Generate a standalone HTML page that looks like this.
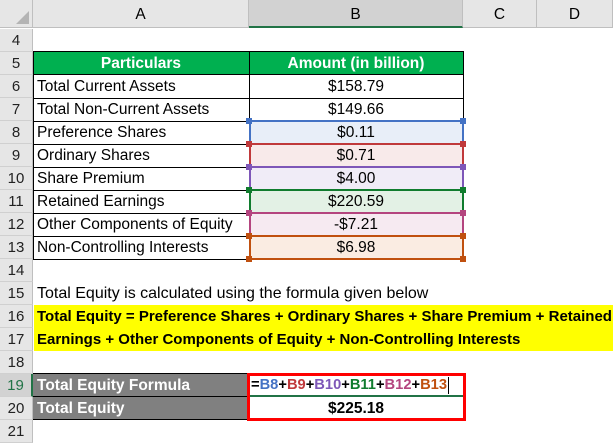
<!DOCTYPE html>
<html><head><style>
*{margin:0;padding:0;box-sizing:border-box}
body{width:613px;height:440px;background:#fff;position:relative;overflow:hidden;font-family:"Liberation Sans",sans-serif;font-size:15.5px;color:#000}
.a{position:absolute}
.rn{position:absolute;left:0;width:33px;height:23px;background:#e6e6e6;border-bottom:1px solid #d0d0d0;border-right:1px solid #bfbfbf;text-align:center;line-height:23px;font-size:15px;color:#222}
.t{position:absolute;height:23px;line-height:23px;white-space:nowrap}
.c{text-align:center}
.rb{position:absolute;border:2px solid}
.sq{position:absolute;width:6px;height:6px}
</style></head><body>
<div class="a" style="left:0;top:0;width:613px;height:28px;background:#e6e6e6;border-bottom:1px solid #bfbfbf"></div>
<div class="a" style="left:0;top:0;width:33px;height:28px;border-right:1px solid #bfbfbf"></div>
<div class="a" style="left:16px;top:11px;width:0;height:0;border-left:13px solid transparent;border-bottom:13px solid #b4b4b4"></div>
<div class="a c" style="left:33px;top:0;width:216px;height:28px;line-height:30px;border-right:1px solid #bfbfbf">A</div>
<div class="a c" style="left:249px;top:0;width:214px;height:28px;line-height:30px;background:#d2d2d2;border-bottom:2px solid #217346;border-right:1px solid #bfbfbf">B</div>
<div class="a c" style="left:463px;top:0;width:74px;height:28px;line-height:30px;border-right:1px solid #bfbfbf">C</div>
<div class="a c" style="left:537px;top:0;width:76px;height:28px;line-height:30px;border-right:1px solid #bfbfbf">D</div>

<div class="rn" style="top:29px">4</div>
<div class="rn" style="top:52px">5</div>
<div class="rn" style="top:75px">6</div>
<div class="rn" style="top:98px">7</div>
<div class="rn" style="top:121px">8</div>
<div class="rn" style="top:144px">9</div>
<div class="rn" style="top:167px">10</div>
<div class="rn" style="top:190px">11</div>
<div class="rn" style="top:213px">12</div>
<div class="rn" style="top:236px">13</div>
<div class="rn" style="top:259px">14</div>
<div class="rn" style="top:282px">15</div>
<div class="rn" style="top:305px">16</div>
<div class="rn" style="top:328px">17</div>
<div class="rn" style="top:351px">18</div>
<div class="rn" style="top:374px;background:#d2d2d2;border-right:2px solid #217346;color:#217346">19</div>
<div class="rn" style="top:397px">20</div>
<div class="rn" style="top:420px">21</div>

<div class="a" style="left:33px;top:51px;width:431px;height:24px;background:#00b050;border:1px solid #000"></div>
<div class="t c" style="left:33px;top:52px;width:216px;color:#fff;font-weight:bold">Particulars</div>
<div class="t c" style="left:249px;top:52px;width:214px;color:#fff;font-weight:bold">Amount (in billion)</div>
<div class="a" style="left:249px;top:51px;width:1px;height:70px;background:#000"></div>
<div class="a" style="left:463px;top:51px;width:1px;height:70px;background:#000"></div>
<div class="a" style="left:33px;top:98px;width:431px;height:1px;background:#000"></div>
<div class="a" style="left:33px;top:121px;width:216px;height:1px;background:#000"></div>
<div class="a" style="left:33px;top:144px;width:216px;height:1px;background:#000"></div>
<div class="a" style="left:33px;top:167px;width:216px;height:1px;background:#000"></div>
<div class="a" style="left:33px;top:190px;width:216px;height:1px;background:#000"></div>
<div class="a" style="left:33px;top:213px;width:216px;height:1px;background:#000"></div>
<div class="a" style="left:33px;top:236px;width:216px;height:1px;background:#000"></div>
<div class="a" style="left:33px;top:259px;width:216px;height:1px;background:#000"></div>
<div class="a" style="left:33px;top:75px;width:1px;height:185px;background:#000"></div>

<div class="t" style="left:37px;top:75px">Total Current Assets</div>
<div class="t" style="left:37px;top:98px">Total Non-Current Assets</div>
<div class="t" style="left:37px;top:121px">Preference Shares</div>
<div class="t" style="left:37px;top:144px">Ordinary Shares</div>
<div class="t" style="left:37px;top:167px">Share Premium</div>
<div class="t" style="left:37px;top:190px">Retained Earnings</div>
<div class="t" style="left:37px;top:213px">Other Components of Equity</div>
<div class="t" style="left:37px;top:236px">Non-Controlling Interests</div>

<div class="t c" style="left:249px;top:75px;width:214px">$158.79</div>
<div class="t c" style="left:249px;top:98px;width:214px">$149.66</div>

<div class="rb" style="left:249px;top:120px;width:215px;height:25px;border-color:#4472c4;background:#e8eef8"></div>
<div class="rb" style="left:249px;top:143px;width:215px;height:25px;border-color:#c0393b;background:#f8eaea"></div>
<div class="rb" style="left:249px;top:166px;width:215px;height:25px;border-color:#7e57b8;background:#f0ecf7"></div>
<div class="rb" style="left:249px;top:189px;width:215px;height:25px;border-color:#107c2e;background:#e3f1e5"></div>
<div class="rb" style="left:249px;top:212px;width:215px;height:25px;border-color:#b4457f;background:#f6eaf1"></div>
<div class="rb" style="left:249px;top:235px;width:215px;height:25px;border-color:#c0500f;background:#faece2"></div>
<div class="sq" style="left:246px;top:118px;background:#4472c4"></div><div class="sq" style="left:460px;top:118px;background:#4472c4"></div>
<div class="sq" style="left:246px;top:141px;background:#c0393b"></div><div class="sq" style="left:460px;top:141px;background:#c0393b"></div>
<div class="sq" style="left:246px;top:164px;background:#7e57b8"></div><div class="sq" style="left:460px;top:164px;background:#7e57b8"></div>
<div class="sq" style="left:246px;top:187px;background:#107c2e"></div><div class="sq" style="left:460px;top:187px;background:#107c2e"></div>
<div class="sq" style="left:246px;top:210px;background:#b4457f"></div><div class="sq" style="left:460px;top:210px;background:#b4457f"></div>
<div class="sq" style="left:246px;top:233px;background:#c0500f"></div><div class="sq" style="left:460px;top:233px;background:#c0500f"></div>
<div class="sq" style="left:246px;top:256px;background:#c0500f"></div><div class="sq" style="left:460px;top:256px;background:#c0500f"></div>

<div class="t c" style="left:249px;top:121px;width:214px">$0.11</div>
<div class="t c" style="left:249px;top:144px;width:214px">$0.71</div>
<div class="t c" style="left:249px;top:167px;width:214px">$4.00</div>
<div class="t c" style="left:249px;top:190px;width:214px">$220.59</div>
<div class="t c" style="left:249px;top:213px;width:214px">-$7.21</div>
<div class="t c" style="left:249px;top:236px;width:214px">$6.98</div>

<div class="t" style="left:37px;top:282px;font-size:16px">Total Equity is calculated using the formula given below</div>
<div class="a" style="left:34px;top:305px;width:579px;height:46px;background:#ffff00"></div>
<div class="t" style="left:37px;top:305px;font-weight:bold;font-size:15px">Total Equity = Preference Shares + Ordinary Shares + Share Premium + Retained</div>
<div class="t" style="left:37px;top:328px;font-weight:bold;font-size:15px">Earnings + Other Components of Equity + Non-Controlling Interests</div>

<div class="a" style="left:33px;top:373px;width:216px;height:47px;background:#808080;border-top:1px solid #000;border-bottom:1px solid #000"></div>
<div class="a" style="left:33px;top:396px;width:216px;height:1px;background:#000"></div>
<div class="t" style="left:37px;top:374px;color:#fff;font-weight:bold">Total Equity Formula</div>
<div class="t" style="left:37px;top:397px;color:#fff;font-weight:bold">Total Equity</div>
<div class="a" style="left:250px;top:395px;width:213px;height:2px;background:#217346"></div>
<div class="t" style="left:251px;top:374px;font-weight:bold;font-size:14.7px"><span>=</span><span style="color:#4472c4">B8</span>+<span style="color:#c0393b">B9</span>+<span style="color:#7e57b8">B10</span>+<span style="color:#107c2e">B11</span>+<span style="color:#b4457f">B12</span>+<span style="color:#c0500f">B13</span></div>
<div class="a" style="left:448px;top:377px;width:1px;height:17px;background:#000"></div>
<div class="t c" style="left:249px;top:397px;width:214px;font-weight:bold">$225.18</div>
<div class="a" style="left:247px;top:373px;width:219px;height:48px;border:3px solid #ff0000"></div>
</body></html>
